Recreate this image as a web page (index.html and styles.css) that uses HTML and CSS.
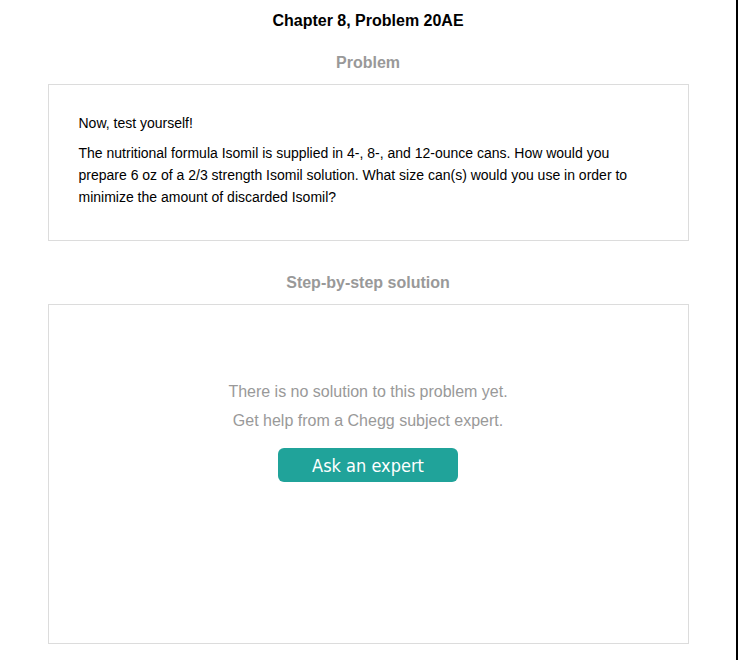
FILE: index.html
```html
<!DOCTYPE html>
<html>
<head>
<meta charset="utf-8">
<link rel="stylesheet" href="styles.css">
</head>
<body>
<div class="page">
  <h1 class="title">Chapter 8, Problem 20AE</h1>
  <h2 class="section-title">Problem</h2>
  <div class="card problem">
    <p class="p-intro">Now, test yourself!</p>
    <p class="p-text">The nutritional formula Isomil is supplied in 4-, 8-, and 12-ounce cans. How would you prepare 6 oz of a 2/3 strength Isomil solution. What size can(s) would you use in order to minimize the amount of discarded Isomil?</p>
  </div>
  <h2 class="section-title second">Step-by-step solution</h2>
  <div class="card solution">
    <p class="empty">There is no solution to this problem yet.</p>
    <p class="empty">Get help from a Chegg subject expert.</p>
    <button class="ask">Ask an expert</button>
  </div>
</div>
</body>
</html>
```

FILE: styles.css
```css
html, body {
  margin: 0;
  padding: 0;
  background: #fff;
}
body {
  font-family: "Liberation Sans", Arial, sans-serif;
}
.page {
  width: 736px;
  min-height: 660px;
  border-right: 2px solid #000;
  box-sizing: content-box;
  display: flex;
  flex-direction: column;
  align-items: center;
}
.title {
  margin: 11px 0 0;
  font-size: 16px;
  line-height: 20px;
  font-weight: bold;
  color: #000;
}
.section-title {
  margin: 22px 0 0;
  font-size: 16px;
  line-height: 20px;
  font-weight: bold;
  color: #999;
}
.section-title.second {
  margin-top: 32px;
}
.card {
  width: 641px;
  box-sizing: border-box;
  border: 1px solid #dcdcdc;
  margin-top: 11px;
}
.problem {
  padding: 27px 30px 32px;
}
.problem p {
  margin: 0;
  font-size: 14px;
  line-height: 22px;
  color: #000;
}
.problem .p-text {
  margin-top: 8px;
}
.solution {
  height: 340px;
  padding-top: 72px;
  display: flex;
  flex-direction: column;
  align-items: center;
}
.empty {
  margin: 0;
  font-size: 16px;
  line-height: 29px;
  color: #999;
}
.ask {
  margin-top: 13px;
  width: 180px;
  height: 34px;
  border: none;
  border-radius: 6px;
  background: #20a39a;
  color: #fff;
  font-family: "DejaVu Sans Condensed", "DejaVu Sans", sans-serif;
  font-stretch: condensed;
  font-size: 18px;
  padding: 0;
}
```
